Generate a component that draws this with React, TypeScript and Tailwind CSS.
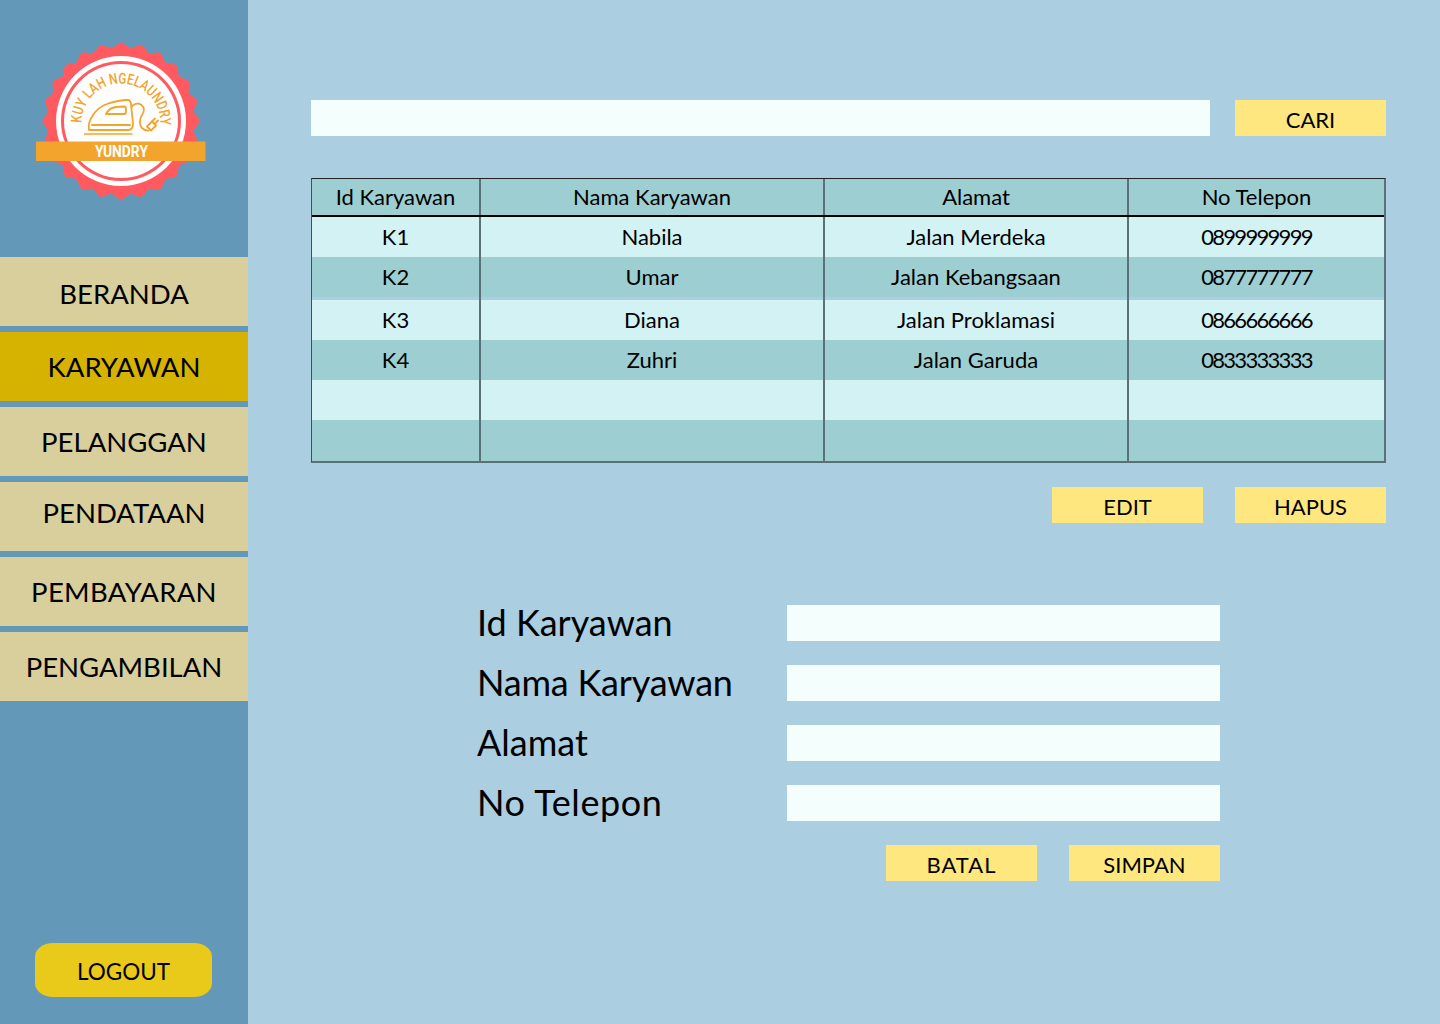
import React from 'react';

const menu = [
  { label: 'BERANDA', cls: 'pt-[4px]' },
  { label: 'KARYAWAN', cls: '' },
  { label: 'PELANGGAN', cls: '' },
  { label: 'PENDATAAN', cls: 'pb-[8px]' },
  { label: 'PEMBAYARAN', cls: 'tracking-[0.3px]' },
  { label: 'PENGAMBILAN', cls: '' },
];

const rows = [
  { id: 'K1', nama: 'Nabila', alamat: 'Jalan Merdeka', telp: '0899999999', h: 'h-[40px]', bg: 'bg-[#d3f2f4]' },
  { id: 'K2', nama: 'Umar', alamat: 'Jalan Kebangsaan', telp: '0877777777', h: 'h-[40px]', bg: 'bg-[#9dced1]' },
  { id: '', nama: '', alamat: '', telp: '', h: 'h-[3px]', bg: 'bg-[#abcee1]' },
  { id: 'K3', nama: 'Diana', alamat: 'Jalan Proklamasi', telp: '0866666666', h: 'h-[40px]', bg: 'bg-[#d3f2f4]' },
  { id: 'K4', nama: 'Zuhri', alamat: 'Jalan Garuda', telp: '0833333333', h: 'h-[40px]', bg: 'bg-[#9dced1]' },
  { id: '', nama: '', alamat: '', telp: '', h: 'h-[40px]', bg: 'bg-[#d3f2f4]' },
  { id: '', nama: '', alamat: '', telp: '', h: 'h-[41px]', bg: 'bg-[#9dced1]' },
];

const fields = [
  { label: 'Id Karyawan', cls: '' },
  { label: 'Nama Karyawan', cls: 'tracking-[-0.2px]' },
  { label: 'Alamat', cls: '' },
  { label: 'No Telepon', cls: 'tracking-[0.6px]' },
];

function scallopPath(cx: number, cy: number, r: number, amp: number, n: number) {
  const pts: string[] = [];
  for (let i = 0; i <= 720; i++) {
    const a = (i / 720) * Math.PI * 2;
    const rr = r + amp * Math.cos(n * a);
    pts.push(`${(cx + rr * Math.sin(a)).toFixed(2)} ${(cy - rr * Math.cos(a)).toFixed(2)}`);
  }
  return 'M' + pts.join('L') + 'Z';
}

const Logo = () => (
  <svg width="170" height="160" viewBox="0 0 170 160" className="block">
    <path d={scallopPath(85, 80, 76, 2.4, 24)} fill="#ff5a5f" />
    <circle cx="85" cy="80" r="65" fill="#fff" />
    <circle cx="85" cy="80" r="60" fill="#ff5a5f" />
    <circle cx="85" cy="80" r="57" fill="#fff" />
    <defs>
      <path id="arc" d="M 45.5 82 A 39.5 39.5 0 1 1 124.5 82" />
    </defs>
    <text fontFamily="Roboto, sans-serif" fontSize="15" fontWeight="500" fill="#f3a42c">
      <textPath href="#arc" startOffset="0" textLength="126" lengthAdjust="spacingAndGlyphs">KUY LAH NGELAUNDRY</textPath>
    </text>
    <g fill="none" stroke="#f3a42c" strokeWidth="1.8" strokeLinecap="round" strokeLinejoin="round">
      <path d="M53 89 C51 79 60 67 71 63 C78 60.5 86 59 92 59 C94 59 94.5 60 95 63 L97 83 C97 87 95 89 92 89 Z" />
      <path d="M70 73 C72 69 76 66.5 80 66 L88 65.5 C89.5 65.5 90 66 90 68 L90 71 C90 72.5 89 73 88 73 Z" />
      <path d="M56 84 L94 84" />
      <path d="M95.7 66 C97 63 102 61.5 105.5 64 C109 67 108 71 106 74 C103.5 78 103 84 106 87 C108 89 110 89.8 112.5 89.5" />
      <path d="M111 85.5 L115 89.5 L120 84.5 L116 80.5 Z" />
      <path d="M118.5 83 L122 79.5 M115.5 81 L119 77.5" />
    </g>
    <path d="M48 93 L96.5 93" stroke="#f3a42c" strokeWidth="1.6" />
    <rect x="0" y="100.5" width="169.5" height="19.5" fill="#f3a42c" />
    <text x="59" y="116" fontFamily="Roboto, sans-serif" fontWeight="700" fontSize="16" fill="#fff" textLength="53" lengthAdjust="spacingAndGlyphs">YUNDRY</text>
  </svg>
);

const Btn = ({ label, className = '' }: { label: string; className?: string }) => (
  <button className={`w-[151px] h-[36px] bg-[#fee77e] text-[22px] leading-[40px] text-black ${className}`}>{label}</button>
);

const Cell = ({ children, w, last, cls = '' }: { children?: React.ReactNode; w: string; last?: boolean; cls?: string }) => (
  <div className={`${w} h-full flex items-center justify-center pb-[2px] ${cls} ${last ? '' : 'border-r-2 border-[#5c7078]'}`}>{children}</div>
);

export default function App() {
  return (
    <div className="w-[1440px] h-[1024px] flex bg-[#abcee1] overflow-hidden font-['Lato',sans-serif] text-black">
      <aside className="w-[248px] h-full bg-[#6498b8] flex flex-col shrink-0">
        <div className="h-[257px] pt-[41px] pl-[36px] shrink-0">
          <Logo />
        </div>
        <nav className="flex flex-col gap-[6px]">
          {menu.map((m) => (
            <div
              key={m.label}
              className={`h-[69px] flex items-center justify-center text-[27.5px] ${m.cls} ${m.label === 'KARYAWAN' ? 'bg-[#d6b300]' : 'bg-[#d8cf9c]'}`}
            >
              {m.label}
            </div>
          ))}
        </nav>
        <div className="mt-auto mb-[27px] ml-[35px] mr-[36px]">
          <div className="h-[54px] bg-[#e9ca1a] rounded-[18px/14px] flex items-center justify-center pt-[4px] text-[22.5px]">LOGOUT</div>
        </div>
      </aside>

      <main className="flex-1 pl-[63px] pt-[100px]">
        <div className="flex w-[1075px] justify-between">
          <div className="w-[899px] h-[36px] bg-[#f4fffd]" />
          <Btn label="CARI" />
        </div>

        <div className="w-[1075px] mt-[42px] border-t border-l border-r-2 border-b-2 border-t-[#222] border-l-[#3f5058] border-r-[#5c7078] border-b-[#5c7078] text-[22px]">
          <div className="h-[38px] flex bg-[#9dced1] border-b-2 border-black">
            <Cell w="w-[169px]">Id Karyawan</Cell>
            <Cell w="w-[344px]">Nama Karyawan</Cell>
            <Cell w="w-[304px]">Alamat</Cell>
            <Cell w="flex-1" last>No Telepon</Cell>
          </div>
          {rows.map((r, i) => (
            <div key={i} className={`flex ${r.h} ${r.bg}`}>
              <Cell w="w-[169px]">{r.id}</Cell>
              <Cell w="w-[344px]">{r.nama}</Cell>
              <Cell w="w-[304px]">{r.alamat}</Cell>
              <Cell w="flex-1" cls="tracking-[-1.7px]" last>{r.telp}</Cell>
            </div>
          ))}
        </div>

        <div className="w-[1075px] mt-[24px] flex justify-end gap-[32px]">
          <Btn label="EDIT" />
          <Btn label="HAPUS" />
        </div>

        <div className="ml-[166px] mt-[82px] w-[743px] flex flex-col gap-[24px]">
          {fields.map((f) => (
            <div key={f.label} className="flex items-center h-[36px]">
              <div className={`w-[310px] text-[36px] leading-none pb-[2px] ${f.cls}`}>{f.label}</div>
              <div className="w-[433px] h-[36px] bg-[#f4fffd]" />
            </div>
          ))}
        </div>
        <div className="ml-[166px] w-[743px] mt-[24px] flex justify-end gap-[32px]">
          <Btn label="BATAL" className="tracking-[1px]" />
          <Btn label="SIMPAN" />
        </div>
      </main>
    </div>
  );
}
